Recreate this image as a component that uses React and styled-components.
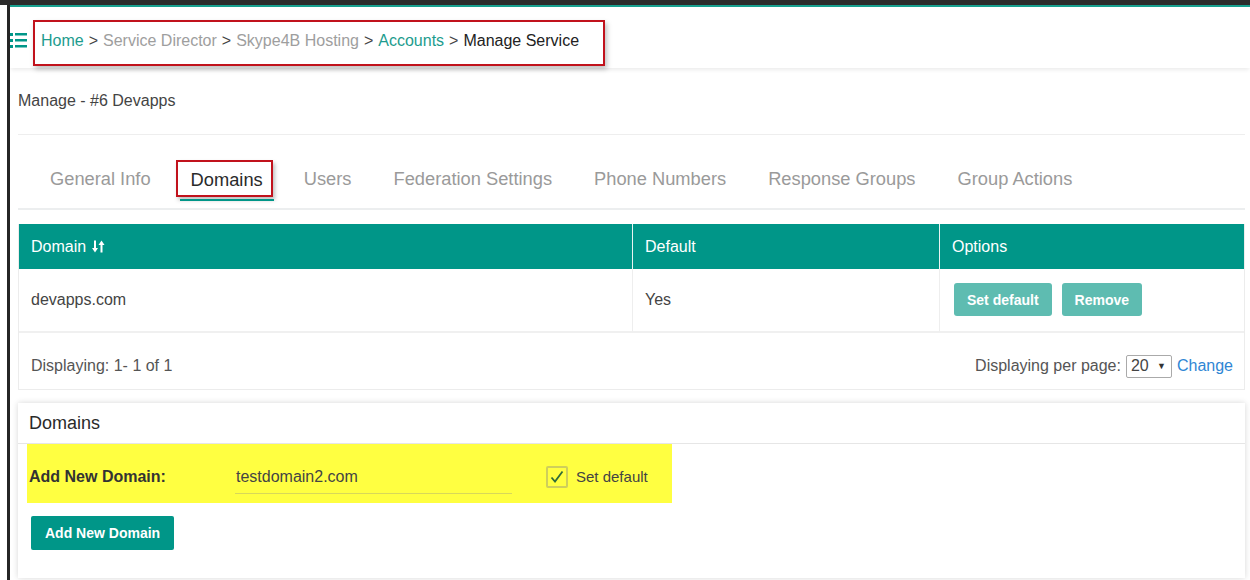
import React from "react";
import styled, { createGlobalStyle } from "styled-components";

const Global = createGlobalStyle`
  html, body { margin: 0; padding: 0; background: #fff; }
  body { font-family: "Liberation Sans", Arial, sans-serif; color: #333; }
  * { box-sizing: border-box; }
`;

const TEAL = "#009688";

const Page = styled.div`
  width: 1250px;
  height: 580px;
  overflow: hidden;
  display: flex;
  flex-direction: column;
`;

const TopStrip = styled.div`
  height: 5px;
  background: #2b2b2b;
  flex: none;
`;

const Main = styled.div`
  flex: 1;
  display: flex;
  padding-left: 7px;
`;

const Frame = styled.div`
  flex: 1;
  border-left: 3px solid #262626;
  display: flex;
  flex-direction: column;
  min-width: 0;
`;

const Header = styled.header`
  height: 63px;
  border-top: 2px solid #17a08f;
  display: flex;
  align-items: flex-start;
  padding-top: 13px;
  box-shadow: 0 3px 4px -1px rgba(0, 0, 0, 0.08);
  position: relative;
  z-index: 1;
`;

const MenuIcon = styled.svg`
  margin-top: 10px;
  flex: none;
`;

const Outlined = styled.div`
  border: 2px solid #c1121c;
  box-shadow: 2px 3px 5px rgba(0, 0, 0, 0.25);
  height: 46px;
  padding: 10px 24px 0 6px;
  margin-left: 5px;
  display: flex;
  align-items: flex-start;
`;

const Crumbs = styled.nav`
  font-size: 16px;
  line-height: 18px;
  display: flex;
  gap: 5px;
  white-space: nowrap;
`;

const Crumb = styled.span`
  color: ${(p) => (p.$tone === "link" ? "#1d9c8e" : p.$tone === "muted" ? "#9e9e9e" : "#222")};
`;

const Sep = styled.span`
  color: #444;
`;

const Content = styled.div`
  padding: 0 5px 0 8px;
  display: flex;
  flex-direction: column;
`;

const TitleRow = styled.div`
  height: 67px;
  display: flex;
  align-items: center;
  font-size: 16px;
  color: #444;
  border-bottom: 1px solid #eee;
`;

const Tabs = styled.div`
  display: flex;
  align-items: center;
  height: 75px;
  padding-left: 18px;
  padding-top: 14px;
  border-bottom: 2px solid #eceeef;
`;

const Tab = styled.div`
  font-size: 18.3px;
  color: #9a9a9a;
  padding: 0 14px;
  margin-right: ${(p) => p.$gap || 0}px;
  line-height: 22px;
`;

const ActiveTab = styled.div`
  position: relative;
  margin-left: 11px;
  margin-right: 17px;
  &::after {
    content: "";
    position: absolute;
    left: 4px;
    right: -1px;
    bottom: -4px;
    height: 2px;
    background: ${TEAL};
  }
`;

const TabBox = styled.div`
  border: 2px solid #c1121c;
  box-shadow: 2px 3px 4px rgba(0, 0, 0, 0.25);
  height: 37px;
  padding: 7px 8px 0 13px;
  font-size: 18.3px;
  color: #2a2a2a;
  line-height: 21px;
`;

const Card = styled.div`
  margin-top: 14px;
  border: 1px solid #ececec;
  border-top: none;
`;

const Table = styled.div`
  display: grid;
  grid-template-columns: 613px 307px 1fr;
`;

const HeadCell = styled.div`
  background: ${TEAL};
  color: #fff;
  height: 45px;
  display: flex;
  align-items: center;
  gap: 6px;
  padding-left: 12px;
  font-size: 16px;
  border-left: ${(p) => (p.$first ? "none" : "1px solid #e9f4f2")};
`;

const Cell = styled.div`
  height: 64px;
  display: flex;
  align-items: center;
  gap: 10px;
  padding-left: ${(p) => p.$pad || 12}px;
  font-size: 16px;
  color: #444;
  border-left: ${(p) => (p.$first ? "none" : "1px solid #eee")};
  border-bottom: 2px solid #f0f0f0;
`;

const SoftButton = styled.button`
  font-family: "Liberation Sans", Arial, sans-serif;
  font-weight: bold;
  font-size: 14px;
  color: #fff;
  background: #5ebcb1;
  border: none;
  border-radius: 3px;
  height: 33px;
  padding: 0 13px;
  margin-top: -1px;
`;

const Footer = styled.div`
  height: 56px;
  display: flex;
  align-items: center;
  justify-content: space-between;
  padding: 10px 11px 0 12px;
  font-size: 16px;
  color: #555;
`;

const PerPage = styled.div`
  display: flex;
  align-items: center;
  gap: 5px;
`;

const Select = styled.div`
  height: 23px;
  width: 46px;
  border: 1px solid #aaa;
  border-radius: 2px;
  display: flex;
  align-items: center;
  justify-content: space-between;
  padding: 0 5px 0 4px;
  font-size: 16px;
  color: #444;
  & > span:last-child {
    font-size: 9px;
    color: #333;
  }
`;

const BlueLink = styled.span`
  color: #2f86d4;
  font-size: 16px;
`;

const Panel = styled.section`
  margin-top: 13px;
  background: #fff;
  box-shadow: 0 0 6px rgba(0, 0, 0, 0.16);
  height: 175px;
`;

const PanelTitle = styled.div`
  height: 41px;
  display: flex;
  align-items: center;
  padding-left: 11px;
  font-size: 18px;
  color: #2a2a2a;
  border-bottom: 1px solid #e6e6e6;
`;

const PanelBody = styled.div`
  padding: 0 0 0 9px;
`;

const Highlight = styled.div`
  width: 645px;
  height: 59px;
  background: #ffff41;
  display: flex;
  align-items: center;
  padding-left: 2px;
`;

const FieldLabel = styled.label`
  width: 206px;
  font-weight: bold;
  font-size: 16px;
  color: #333;
  margin-top: 6px;
`;

const FieldInput = styled.div`
  width: 277px;
  height: 38px;
  border-bottom: 1px solid #d8d85a;
  display: flex;
  align-items: center;
  padding-left: 1px;
  padding-top: 5px;
  font-size: 16px;
  color: #444;
  margin-top: 3px;
`;

const CheckRow = styled.div`
  margin-left: 34px;
  margin-top: 6px;
  display: flex;
  align-items: center;
  gap: 8px;
  font-size: 15px;
  color: #444;
`;

const CheckBox = styled.span`
  width: 22px;
  height: 22px;
  border: 2px solid #cfcf5a;
  border-radius: 2px;
  display: flex;
  align-items: center;
  justify-content: center;
`;

const PrimaryButton = styled.button`
  margin-top: 13px;
  margin-left: 4px;
  font-family: "Liberation Sans", Arial, sans-serif;
  font-size: 14px;
  font-weight: bold;
  color: #fff;
  background: ${TEAL};
  border: none;
  border-radius: 2px;
  height: 34px;
  padding: 0 14px;
`;

const SortIcon = () => (
  <svg width="13" height="13" viewBox="0 0 13 13" fill="#fff">
    <rect x="2" y="0.5" width="2" height="9" />
    <polygon points="0,8 6,8 3,12.5" />
    <rect x="8.5" y="3.5" width="2" height="9" />
    <polygon points="6.5,5 12.5,5 9.5,0.5" />
  </svg>
);

export default function App() {
  return (
    <Page>
      <Global />
      <TopStrip />
      <Main>
        <Frame>
          <Header>
            <MenuIcon width="18" height="20" viewBox="0 0 18 20">
              <rect x="0" y="3" width="3" height="3" fill={TEAL} />
              <rect x="0" y="9" width="3" height="3" fill={TEAL} />
              <rect x="0" y="15" width="3" height="3" fill={TEAL} />
              <rect x="5" y="3" width="12" height="2.5" fill={TEAL} />
              <rect x="5" y="9" width="12" height="2.5" fill={TEAL} />
              <rect x="5" y="15" width="12" height="2.5" fill={TEAL} />
            </MenuIcon>
            <Outlined>
              <Crumbs>
                <Crumb $tone="link">Home</Crumb>
                <Sep>&gt;</Sep>
                <Crumb $tone="muted">Service Director</Crumb>
                <Sep>&gt;</Sep>
                <Crumb $tone="muted">Skype4B Hosting</Crumb>
                <Sep>&gt;</Sep>
                <Crumb $tone="link">Accounts</Crumb>
                <Sep>&gt;</Sep>
                <Crumb>Manage Service</Crumb>
              </Crumbs>
            </Outlined>
          </Header>
          <Content>
            <TitleRow>Manage - #6 Devapps</TitleRow>
            <Tabs>
              <Tab>General Info</Tab>
              <ActiveTab>
                <TabBox>Domains</TabBox>
              </ActiveTab>
              <Tab $gap={14}>Users</Tab>
              <Tab $gap={14}>Federation Settings</Tab>
              <Tab $gap={14}>Phone Numbers</Tab>
              <Tab $gap={14}>Response Groups</Tab>
              <Tab>Group Actions</Tab>
            </Tabs>
            <Card>
              <Table>
                <HeadCell $first>
                  Domain <SortIcon />
                </HeadCell>
                <HeadCell>Default</HeadCell>
                <HeadCell>Options</HeadCell>
                <Cell $first>devapps.com</Cell>
                <Cell>Yes</Cell>
                <Cell $pad={14}>
                  <SoftButton>Set default</SoftButton>
                  <SoftButton>Remove</SoftButton>
                </Cell>
              </Table>
              <Footer>
                <span>Displaying: 1- 1 of 1</span>
                <PerPage>
                  <span>Displaying per page:</span>
                  <Select>
                    <span>20</span>
                    <span>▼</span>
                  </Select>
                  <BlueLink>Change</BlueLink>
                </PerPage>
              </Footer>
            </Card>
            <Panel>
              <PanelTitle>Domains</PanelTitle>
              <PanelBody>
                <Highlight>
                  <FieldLabel>Add New Domain:</FieldLabel>
                  <FieldInput>testdomain2.com</FieldInput>
                  <CheckRow>
                    <CheckBox>
                      <svg width="14" height="14" viewBox="0 0 14 14">
                        <path d="M1.5 7.5 L5 11.5 L12.5 1.5" fill="none" stroke="#2f6d3a" strokeWidth="1.8" />
                      </svg>
                    </CheckBox>
                    Set default
                  </CheckRow>
                </Highlight>
                <PrimaryButton>Add New Domain</PrimaryButton>
              </PanelBody>
            </Panel>
          </Content>
        </Frame>
      </Main>
    </Page>
  );
}
